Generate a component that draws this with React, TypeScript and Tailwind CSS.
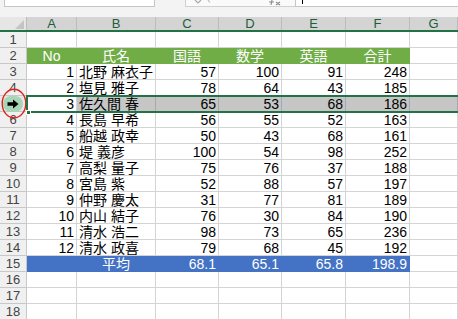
import React from "react";

const cols = ["A", "B", "C", "D", "E", "F", "G"];
const widths = [50, 79, 63, 63, 64, 64, 48];

const data: [number, string, number, number, number, number][] = [
  [1, "北野 麻衣子", 57, 100, 91, 248],
  [2, "塩見 雅子", 78, 64, 43, 185],
  [3, "佐久間 春", 65, 53, 68, 186],
  [4, "長島 早希", 56, 55, 52, 163],
  [5, "船越 政幸", 50, 43, 68, 161],
  [6, "堤 義彦", 100, 54, 98, 252],
  [7, "高梨 量子", 75, 76, 37, 188],
  [8, "宮島 紫", 52, 88, 57, 197],
  [9, "仲野 慶太", 31, 77, 81, 189],
  [10, "内山 結子", 76, 30, 84, 190],
  [11, "清水 浩二", 98, 73, 65, 236],
  [12, "清水 政喜", 79, 68, 45, 192],
];

const font = { fontFamily: '"Liberation Sans", "Noto Sans CJK JP", sans-serif' };

function RowHeader({ n, active }: { n: number; active?: boolean }) {
  if (active) {
    return (
      <div className="relative flex h-[16px] w-[27px] shrink-0 items-center justify-center border-b border-r border-[#c8c8c8] bg-[#e8e8e8]">
        <div className="flex h-[16px] w-[20px] items-center justify-center rounded-full bg-[#a6d6b6]">
          <svg width="12" height="10" viewBox="0 0 12 10">
            <path d="M0.5 3.3 H6 V0.5 L11.5 5 L6 9.5 V6.7 H0.5 Z" fill="#000" />
          </svg>
        </div>
        <svg className="absolute left-[1px] top-[-8px]" width="26" height="31" viewBox="0 0 26 31">
          <ellipse cx="13" cy="15.5" rx="11.8" ry="14.3" fill="none" stroke="#e0201b" strokeWidth="1.4" />
        </svg>
      </div>
    );
  }
  return (
    <div className="flex h-[16px] w-[27px] shrink-0 items-center justify-center border-b border-r border-[#c8c8c8] bg-[#f0f0f0] text-[13px] text-[#444]">
      {n}
    </div>
  );
}

function Cell({
  children,
  w,
  align = "right",
  cls = "",
}: {
  children?: React.ReactNode;
  w: number;
  align?: "left" | "right" | "center";
  cls?: string;
}) {
  const a = align === "left" ? "justify-start pl-[2px]" : align === "center" ? "justify-center" : "justify-end pr-[2px]";
  return (
    <div
      className={`flex h-[16px] shrink-0 items-center overflow-hidden whitespace-nowrap border-b border-r text-[14px] leading-none ${a} ${cls}`}
      style={{ width: w }}
    >
      {children}
    </div>
  );
}

export default function App() {
  return (
    <div className="h-[319px] w-[458px] overflow-hidden bg-white" style={font}>
      {/* formula bar */}
      <div className="flex h-[17px] items-start bg-[#f3f3f3]">
        <div className="ml-[4px] h-[7px] w-[151px] border-b border-l border-r border-[#c6c6c6] bg-white" />
        <div className="ml-[30px] flex h-[7px] w-[110px] items-start border-b border-l border-[#d0d0d0] bg-[#fafafa] pl-[8px]">
          <svg width="100" height="6" viewBox="0 0 100 6">
            <path d="M1 0 L4 3 L7 0" fill="none" stroke="#a8a8a8" strokeWidth="1.2" />
            <path d="M14 0 L16 2.5" fill="none" stroke="#bdbdbd" strokeWidth="1.2" />
            <path d="M78 0 L77 5 M75 2 H80 M82 2 L86 5 M86 2 L82 5" fill="none" stroke="#8a8a8a" strokeWidth="1.1" />
          </svg>
        </div>
        <div className="flex h-[7px] flex-1 items-start border-b border-l border-[#c6c6c6] bg-white pl-[6px]">
          <div className="h-[4px] w-px bg-black" />
        </div>
      </div>
      {/* column headers */}
      <div className="flex h-[15px] border-b-2 border-[#217346] bg-[#d4d4d4]">
        <div className="relative h-full w-[27px] shrink-0 border-r border-[#bcbcbc] bg-[#e6e6e6]">
          <svg className="absolute bottom-[1px] right-[2px]" width="9" height="9" viewBox="0 0 9 9">
            <path d="M9 0 V9 H0 Z" fill="#c4c4c4" />
          </svg>
        </div>
        {cols.map((c, i) => (
          <div
            key={c}
            className="flex shrink-0 items-center justify-center border-r border-[#bcbcbc] text-[13px] leading-none text-[#1e5e3a]"
            style={{ width: widths[i] }}
          >
            {c}
          </div>
        ))}
      </div>
      {/* rows */}
      <div className="relative">
        {/* row 1 */}
        <div className="flex">
          <RowHeader n={1} />
          {widths.map((w, i) => (
            <Cell key={i} w={w} cls="border-[#d4d4d4]" />
          ))}
        </div>
        {/* row 2 header */}
        <div className="flex">
          <RowHeader n={2} />
          {["No", "氏名", "国語", "数学", "英語", "合計"].map((t, i) => (
            <Cell key={i} w={widths[i]} align="center" cls="border-[#70ad47] bg-[#70ad47] text-white">
              {t}
            </Cell>
          ))}
          <Cell w={48} cls="border-[#d4d4d4]" />
        </div>
        {data.map((r, ri) => {
          const active = ri === 2;
          const sel = active ? "bg-[#c6c6c6] border-[#a8a8a8]" : "border-[#d4d4d4]";
          return (
            <div key={ri} className={`relative flex ${active ? "z-10" : ""}`}>
              <RowHeader n={ri + 3} active={active} />
              <Cell w={widths[0]} cls="border-[#d4d4d4] bg-white">
                {r[0]}
              </Cell>
              <Cell w={widths[1]} align="left" cls={sel}>
                {r[1]}
              </Cell>
              {[r[2], r[3], r[4], r[5]].map((v, i) => (
                <Cell key={i} w={widths[i + 2]} cls={sel}>
                  {v}
                </Cell>
              ))}
              <Cell w={48} cls={sel} />
              {active && (
                <>
                  <div className="pointer-events-none absolute left-[26px] right-[-4px] top-[-1px] bottom-[-1px] border-2 border-[#217346]" />
                  <div className="absolute left-[26px] bottom-[-3px] h-[5px] w-[5px] border border-white bg-[#217346]" />
                </>
              )}
            </div>
          );
        })}
        {/* row 15 */}
        <div className="flex">
          <RowHeader n={15} />
          <Cell w={widths[0]} cls="border-[#4472c4] bg-[#4472c4] text-white" />
          <Cell w={widths[1]} align="center" cls="border-[#4472c4] bg-[#4472c4] text-white">
            平均
          </Cell>
          {["68.1", "65.1", "65.8", "198.9"].map((v, i) => (
            <Cell key={i} w={widths[i + 2]} cls="border-[#4472c4] bg-[#4472c4] text-white">
              {v}
            </Cell>
          ))}
          <Cell w={48} cls="border-[#d4d4d4]" />
        </div>
        {[16, 17, 18].map((n) => (
          <div key={n} className="flex">
            <RowHeader n={n} />
            {widths.map((w, i) => (
              <Cell key={i} w={w} cls="border-[#d4d4d4]" />
            ))}
          </div>
        ))}
      </div>
    </div>
  );
}
